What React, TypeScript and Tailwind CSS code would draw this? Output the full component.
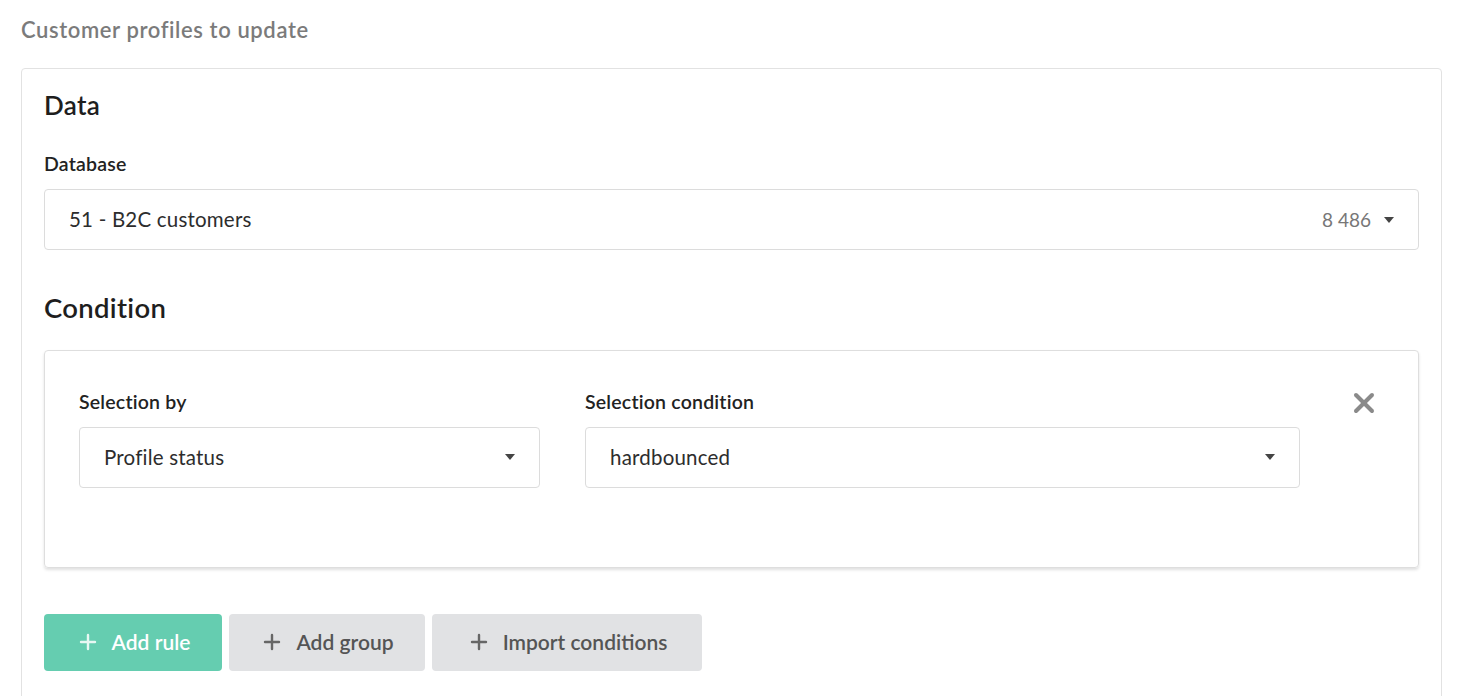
import { X, Plus } from "lucide-react";

function Caret() {
  return (
    <svg width="10" height="6" viewBox="0 0 10 6" className="shrink-0">
      <path d="M0 0h10L5 6z" fill="#444" />
    </svg>
  );
}

function SelectBox({ value, extra, className }: { value: string; extra?: string; className?: string }) {
  return (
    <div
      className={`flex h-[61px] items-center rounded border border-[#dcdcdc] bg-white pl-[24px] pr-[24px] ${className ?? ""}`}
    >
      <span className="flex-1 text-[20.5px] tracking-[0.2px] text-[#2d2d2d]">{value}</span>
      {extra && <span className="mr-[13px] text-[19px] text-[#777]">{extra}</span>}
      <Caret />
    </div>
  );
}

function Btn({ label, primary, w }: { label: string; primary?: boolean; w: string }) {
  return (
    <button
      className={`flex h-[57px] items-center justify-center gap-[12px] rounded text-[21px] font-semibold ${w} ${
        primary ? "bg-[#65cdb0] text-white" : "bg-[#e1e2e4] text-[#555]"
      }`}
    >
      <Plus size={24} strokeWidth={2.4} className={primary ? "text-[#e8f8f3]" : "text-[#666]"} />
      {label}
    </button>
  );
}

export default function App() {
  return (
    <div className="h-[696px] overflow-hidden bg-white px-[21px] pt-[13px] font-['Lato',sans-serif] text-[#222]">
      <h2 className="text-[22px] font-semibold tracking-[0.6px] text-[#7b7b7b]">Customer profiles to update</h2>

      <div className="mt-[22px] rounded border border-[#e2e2e2] px-[22px] pt-[17px] pb-[40px]">
        <h3 className="text-[26px] font-semibold tracking-[0.3px] text-[#1e1e1e]">Data</h3>
        <div className="mt-[24px] text-[19.5px] font-semibold tracking-[0.2px] text-[#222]">Database</div>
        <SelectBox value="51 - B2C customers" extra="8 486" className="mt-[11px]" />

        <h3 className="mt-[37px] text-[27.5px] font-semibold tracking-[0.3px] text-[#1e1e1e]">Condition</h3>

        <div className="mt-[21px] h-[218px] rounded border border-[#dedede] shadow-[0_2px_3px_rgba(0,0,0,0.12)]">
          <div className="flex gap-[45px] pl-[34px] pr-[42px] pt-[36px]">
            <div className="w-[461px]">
              <div className="text-[19.5px] font-semibold tracking-[0.2px]">Selection by</div>
              <SelectBox value="Profile status" className="mt-[11px]" />
            </div>
            <div className="w-[715px]">
              <div className="text-[19.5px] font-semibold tracking-[0.2px]">Selection condition</div>
              <SelectBox value="hardbounced" className="mt-[11px]" />
            </div>
            <div className="flex flex-1 justify-end">
              <X size={32} strokeWidth={3} className="mr-[-4px] text-[#8a8a8a]" />
            </div>
          </div>
        </div>

        <div className="mt-[46px] flex gap-[7px]">
          <Btn label="Add rule" primary w="w-[178px]" />
          <Btn label="Add group" w="w-[196px]" />
          <Btn label="Import conditions" w="w-[270px]" />
        </div>
      </div>
    </div>
  );
}
